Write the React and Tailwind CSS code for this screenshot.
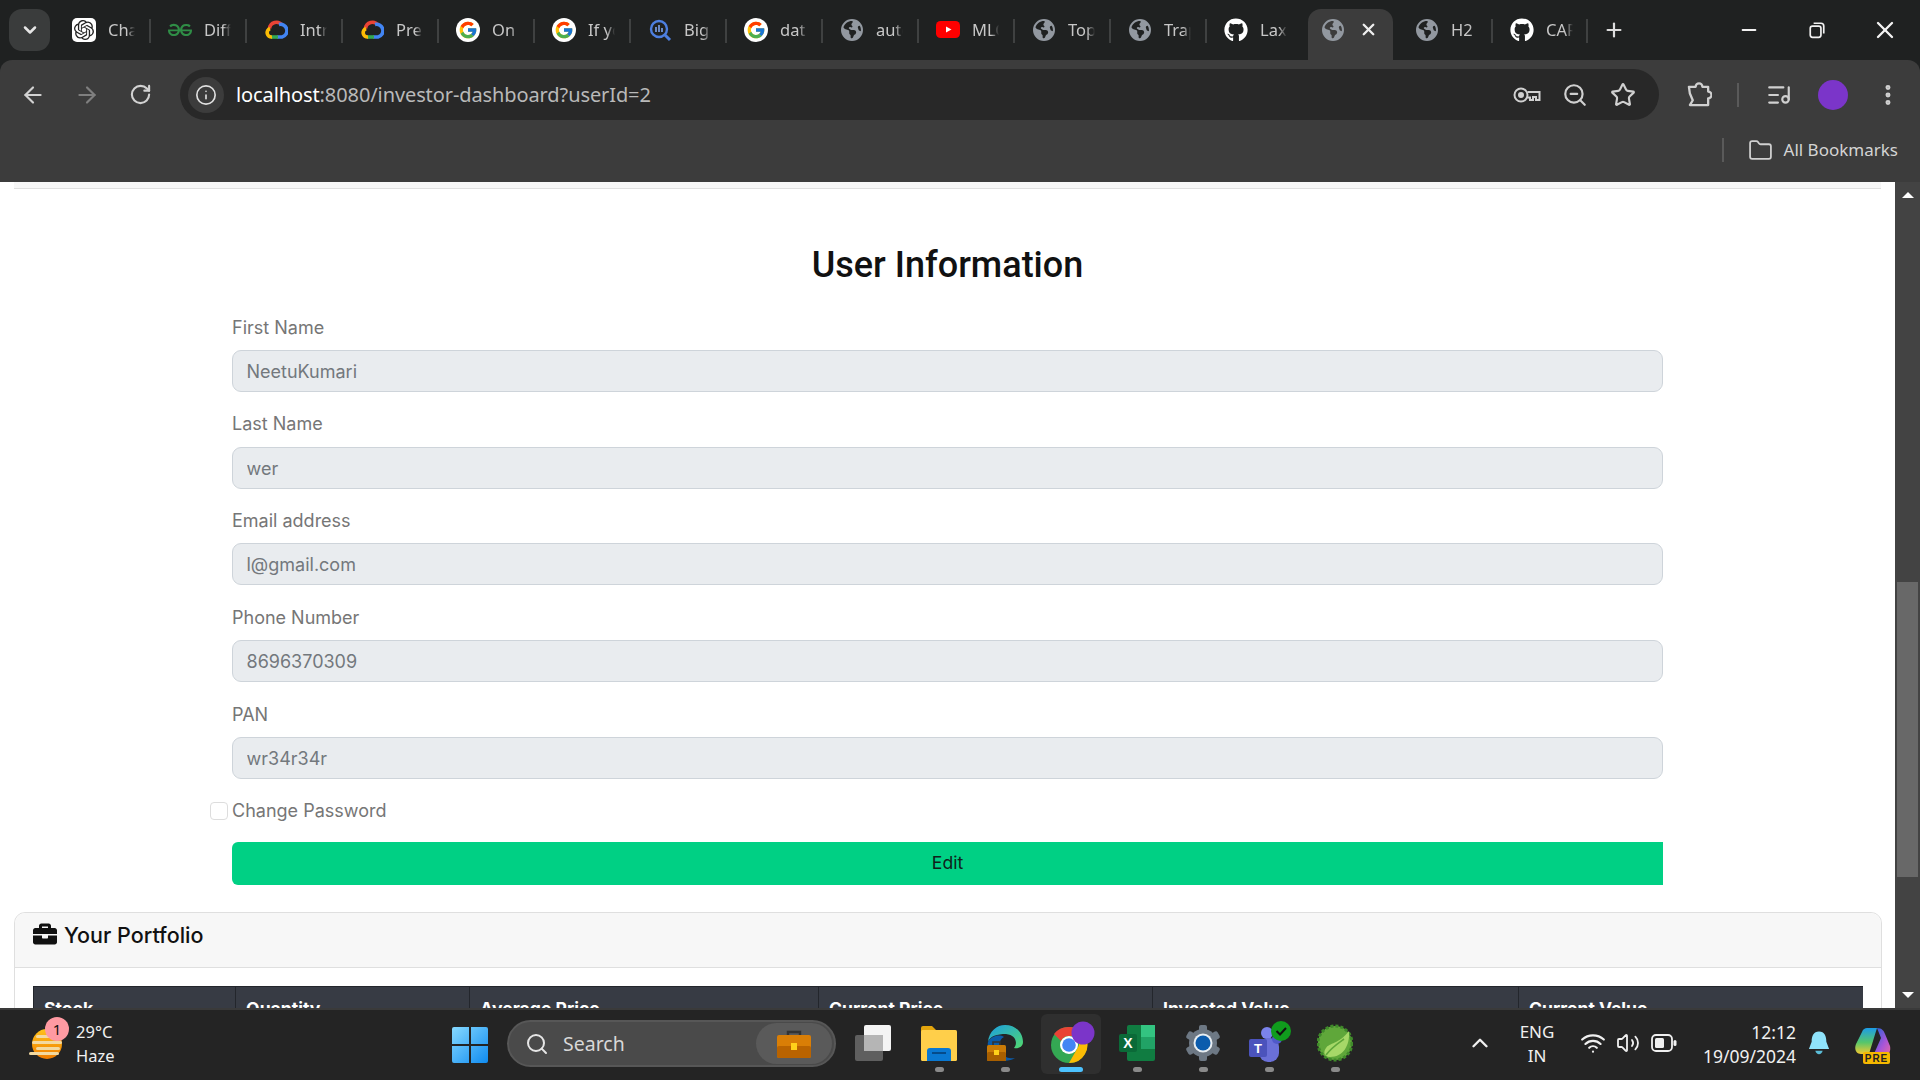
import {
  ArrowLeft,
  ArrowRight,
  ChevronDown,
  ChevronUp,
  EllipsisVertical,
  Folder,
  Info,
  ListMusic,
  Minus,
  Plus,
  RotateCw,
  Search,
  Star,
  Volume2,
  Wifi,
  X,
  ZoomOut,
} from 'lucide-react';
import { FaBriefcase, FaGithub } from 'react-icons/fa';
import { FaEarthAmericas } from 'react-icons/fa6';
import { FcGoogle } from 'react-icons/fc';
import { SiGeeksforgeeks, SiOpenai } from 'react-icons/si';

const uiFont = "font-['Noto_Sans',sans-serif]";

function GptIcon() {
  return (
    <span className="w-6 h-6 rounded-[5px] bg-white flex items-center justify-center">
      <SiOpenai className="w-5 h-5 text-[#222]" />
    </span>
  );
}

function GfgIcon() {
  return <SiGeeksforgeeks className="w-6 h-6 text-[#2f8d46]" />;
}

function CloudIcon() {
  return (
    <svg viewBox="0 0 24 24" className="w-6 h-6" fill="none" strokeWidth="3.6">
      <path d="M5.5 10.5 A7 7 0 0 1 18 7" stroke="#ea4335" />
      <path d="M15 6.5 A6 6 0 0 1 18 19 H13" stroke="#4285f4" />
      <path d="M14 19 H7" stroke="#34a853" />
      <path d="M8 19 A4.4 4.4 0 0 1 6 10.5" stroke="#fbbc05" />
    </svg>
  );
}

function GoogleIcon() {
  return (
    <span className="w-6 h-6 rounded-full bg-white flex items-center justify-center">
      <FcGoogle className="w-5 h-5" />
    </span>
  );
}

function QueryIcon() {
  return (
    <svg viewBox="0 0 24 24" className="w-6 h-6" fill="none">
      <circle cx="11" cy="11" r="8" stroke="#4d7fe0" strokeWidth="2.4" />
      <path d="M16.5 16.5 L22 22" stroke="#4d7fe0" strokeWidth="3" />
      <path d="M8 9 V14 M11 7 V14 M14 10 V14" stroke="#7da3ee" strokeWidth="1.6" />
    </svg>
  );
}

function GlobeIcon() {
  return <FaEarthAmericas className="w-[22px] h-[22px] text-[#9298a0]" />;
}

function TubeIcon() {
  return (
    <svg viewBox="0 0 24 24" className="w-6 h-6">
      <rect x="0" y="3" width="24" height="17" rx="4.5" fill="#ff0000" />
      <path d="M10 8.5 L15.5 11.5 L10 14.5 Z" fill="#fff" />
    </svg>
  );
}

function HubIcon() {
  return (
    <span className="w-6 h-6 rounded-full bg-[#1f2121] flex items-center justify-center">
      <FaGithub className="w-6 h-6 text-white" />
    </span>
  );
}

const tabs = [
  { icon: GptIcon, label: 'Chat' },
  { icon: GfgIcon, label: 'Diff' },
  { icon: CloudIcon, label: 'Intro' },
  { icon: CloudIcon, label: 'Pre' },
  { icon: GoogleIcon, label: 'On' },
  { icon: GoogleIcon, label: 'If yo' },
  { icon: QueryIcon, label: 'Big' },
  { icon: GoogleIcon, label: 'dat' },
  { icon: GlobeIcon, label: 'auto' },
  { icon: TubeIcon, label: 'MLO' },
  { icon: GlobeIcon, label: 'Top' },
  { icon: GlobeIcon, label: 'Trap' },
  { icon: HubIcon, label: 'Lax', last: true },
];

function Tab({ icon: Icon, label, last, width = 'w-24' }) {
  return (
    <div className={`${width} h-[42px] shrink-0 flex items-center pl-[17px] relative`}>
      <span className="w-6 h-6 flex items-center justify-center shrink-0">
        <Icon />
      </span>
      <span className="ml-3 w-[27px] overflow-hidden whitespace-nowrap text-[16.5px] leading-6 text-[#c7c7c7] [mask-image:linear-gradient(to_right,black_70%,transparent)]">
        {label}
      </span>
      {!last && <span className="absolute right-0 top-[10px] w-[2px] h-6 bg-[#3f4141]" />}
    </div>
  );
}

function TabStrip() {
  return (
    <div className="h-[60px] shrink-0 bg-[#1f2121] flex items-start">
      <button className="ml-[9px] mt-[9px] w-[41px] h-[42px] rounded-[13px] bg-[#3a3c3c] flex items-center justify-center">
        <ChevronDown className="w-5 h-5 text-[#e6e6e6]" strokeWidth={3} />
      </button>
      <div className="ml-[5px] mt-[9px] flex items-start">
        {tabs.map((tab) => (
          <Tab key={tab.label + tab.icon.name} {...tab} />
        ))}
        <div className="ml-[5px] w-[85px] h-[51px] rounded-t-[13px] bg-[#3c3c3c] flex items-start pt-[9px] pl-[13px] shrink-0">
          <span className="w-6 h-6 flex items-center justify-center">
            <GlobeIcon />
          </span>
          <X className="ml-[14px] mt-[2px] w-[19px] h-[19px] text-[#eeeeee]" strokeWidth={3} />
        </div>
        <div className="ml-[5px] flex">
          <Tab icon={GlobeIcon} label="H2" width="w-[95px]" />
          <Tab icon={HubIcon} label="CAR" width="w-[95px]" />
        </div>
        <Plus className="ml-[15px] mt-[10px] w-[22px] h-[22px] text-[#dddddd]" strokeWidth={2.4} />
      </div>
      <div className="ml-auto mr-[1px] flex text-[#f2f2f2] pt-[8px]">
        <span className="w-[68px] h-[44px] flex items-center justify-center">
          <Minus className="w-[22px] h-[22px]" />
        </span>
        <span className="w-[68px] h-[44px] flex items-center justify-center">
          <svg viewBox="0 0 16 16" className="w-[18px] h-[18px]" fill="none" stroke="currentColor" strokeWidth="1.5">
            <rect x="2" y="4.5" width="9.5" height="10" rx="2" />
            <path d="M5 2 H11.5 A2.5 2.5 0 0 1 14 4.5 V11" />
          </svg>
        </span>
        <span className="w-[68px] h-[44px] flex items-center justify-center">
          <X className="w-[28px] h-[28px]" strokeWidth={2} />
        </span>
      </div>
    </div>
  );
}

function KeyIcon() {
  return (
    <svg viewBox="0 0 28 20" className="w-[28px] h-[20px]" fill="none" stroke="#d0d0d0" strokeWidth="2">
      <circle cx="8" cy="10" r="6.5" />
      <circle cx="8" cy="10" r="2" fill="#d0d0d0" />
      <path d="M14.5 7 H26.5 V15 H23 V12 H20 V15 H17 V12.5 H14.5" />
    </svg>
  );
}

function ExtensionIcon() {
  return (
    <svg viewBox="0 0 26 28" className="w-[25px] h-[27px]" fill="none" stroke="#d0d0d0" strokeWidth="2.4" strokeLinejoin="round">
      <path d="M2 6 H9 A3.5 3.5 0 0 1 16 6 H22 V11 A3.5 3.5 0 0 1 22 18 V25 H3 L6 20 L3 13 L2 6 Z" />
    </svg>
  );
}

function Toolbar() {
  return (
    <div className="h-[122px] shrink-0 bg-[#1f2121]">
      <div className="h-full bg-[#3c3c3c] rounded-t-[12px] flex flex-col">
        <div className="h-[70px] pt-[9px] flex items-start">
          <div className="w-[180px] h-[51px] flex items-center text-[#d2d2d2]">
            <ArrowLeft className="ml-[20px] w-[26px] h-[26px]" strokeWidth={2} />
            <ArrowRight className="ml-[28px] w-[26px] h-[26px] text-[#7f7f7f]" strokeWidth={2} />
            <RotateCw className="ml-[29px] w-[23px] h-[23px]" strokeWidth={2.2} />
          </div>
          <div className="w-[1479px] h-[51px] rounded-full bg-[#282828] flex items-center">
            <span className="ml-[8px] w-[36px] h-[36px] rounded-full bg-[#3c3c3c] flex items-center justify-center">
              <Info className="w-[22px] h-[22px] text-[#e0e0e0]" strokeWidth={1.8} />
            </span>
            <span className={`ml-[12px] text-[20px] tracking-[-0.1px] text-[#b9b9b9] whitespace-nowrap ${uiFont}`}>
              <span className="text-white">localhost</span>:8080/investor-dashboard?userId=2
            </span>
            <div className="ml-auto mr-[23px] flex items-center text-[#d0d0d0]">
              <KeyIcon />
              <ZoomOut className="ml-[21px] w-[26px] h-[26px]" strokeWidth={2} />
              <Star className="ml-[22px] w-[26px] h-[26px]" strokeWidth={2} />
            </div>
          </div>
          <div className="flex-1 h-[51px] flex items-center text-[#d0d0d0]">
            <span className="ml-[28px]">
              <ExtensionIcon />
            </span>
            <span className="ml-[25px] w-[2px] h-6 bg-[#5a5a5a]" />
            <ListMusic className="ml-[27px] w-[26px] h-[26px]" strokeWidth={2} />
            <span className="ml-[26px] w-[30px] h-[30px] rounded-full bg-[#7b35c9]" />
            <EllipsisVertical className="ml-[27px] w-[26px] h-[26px]" strokeWidth={2.6} />
          </div>
        </div>
        <div className="flex-1 flex items-center justify-end pr-[22px] pb-[12px]">
          <span className="w-[2px] h-6 bg-[#5a5a5a]" />
          <Folder className="ml-[24px] w-[25px] h-[25px] text-[#d0d0d0]" strokeWidth={1.7} />
          <span className={`ml-[11px] text-[17px] text-[#d4d4d4] whitespace-nowrap ${uiFont}`}>All Bookmarks</span>
        </div>
      </div>
    </div>
  );
}

const fields = [
  { label: 'First Name', value: 'NeetuKumari' },
  { label: 'Last Name', value: 'wer' },
  { label: 'Email address', value: 'l@gmail.com' },
  { label: 'Phone Number', value: '8696370309' },
  { label: 'PAN', value: 'wr34r34r' },
];

function Field({ label, value }) {
  return (
    <div className="mb-[19.6px]">
      <label className="block mb-[8.8px] text-[18px] leading-[26.4px] text-[#767676]">{label}</label>
      <input
        readOnly
        value={value}
        className="block w-full h-[42px] pl-[13.5px] pr-[14px] pt-[1px] rounded-[9px] border border-[#ced4da] bg-[#e9ecef] text-[18px] text-[#73787d] outline-none"
      />
    </div>
  );
}

const columns = [
  { name: 'Stock', width: 'w-[202px]' },
  { name: 'Quantity', width: 'w-[234px]' },
  { name: 'Average Price', width: 'w-[349px]' },
  { name: 'Current Price', width: 'w-[334px]' },
  { name: 'Invested Value', width: 'w-[366px]' },
  { name: 'Current Value', width: 'flex-1' },
];

function PageContent() {
  return (
    <div className="flex-1 min-w-0 bg-white font-['Inter',sans-serif]">
      <div className="mx-[14px] h-[7px] bg-[#f7f7f7] border-b border-[#dfdfdf]" />
      <h2 className="mt-[55px] text-center text-[36px] leading-[42px] font-medium text-[#111] font-['Roboto',sans-serif]">
        User Information
      </h2>
      <form className="mt-[28.6px] mx-[232px]">
        {fields.map((field) => (
          <Field key={field.label} {...field} />
        ))}
        <div className="h-[26px] -mt-[0.6px] flex items-center -ml-[22px]">
          <span className="w-[18px] h-[18px] rounded-[4px] border border-[#dddddd] bg-white" />
          <span className="ml-[4px] text-[18px] text-[#767676]">Change Password</span>
        </div>
        <button
          type="button"
          className="mt-[17.6px] w-full h-[43px] rounded-l-[6px] bg-[#00d084] text-[17.6px] text-[#10201a]"
        >
          Edit
        </button>
      </form>
      <div className="mt-[27px] ml-[14px] mr-[13px] rounded-t-[11px] border border-[#dfdfdf]">
        <div className="h-[55px] bg-[#f7f7f7] rounded-t-[11px] border-b border-[#dfdfdf] flex items-start pt-[8px] pl-[18px]">
          <FaBriefcase className="mt-[1px] w-[24px] h-[24px] text-[#111]" />
          <span className="ml-[7px] text-[21.5px] leading-[28px] font-medium text-[#111]">Your Portfolio</span>
        </div>
        <div className="mt-[18px] mx-[18px] h-[60px] bg-[#373b44] flex border-t border-[#23262c]">
          {columns.map((col) => (
            <div
              key={col.name}
              className={`${col.width} px-[10px] pt-[9px] border-l border-[#23262c] text-[17.6px] font-bold text-white whitespace-nowrap`}
            >
              {col.name}
            </div>
          ))}
        </div>
      </div>
    </div>
  );
}

function Scrollbar() {
  return (
    <div className="w-[25px] shrink-0 bg-[#434343] flex flex-col items-center">
      <div className="h-[26px] w-full flex items-center justify-center">
        <span className="w-0 h-0 border-x-[6px] border-x-transparent border-b-[6px] border-b-white" />
      </div>
      <div className="h-[374px]" />
      <div className="h-[295px] w-[21px] bg-[#686868]" />
      <div className="flex-1" />
      <div className="h-[26px] w-full flex items-center justify-center">
        <span className="w-0 h-0 border-x-[6px] border-x-transparent border-t-[6px] border-t-white" />
      </div>
    </div>
  );
}

function WeatherIcon() {
  return (
    <svg viewBox="0 0 34 32" className="w-[34px] h-[32px]">
      <defs>
        <linearGradient id="sun" x1="0" y1="0" x2="0" y2="1">
          <stop offset="0" stopColor="#ffc21a" />
          <stop offset="1" stopColor="#f07c00" />
        </linearGradient>
      </defs>
      <circle cx="18" cy="16" r="15" fill="url(#sun)" />
      <g fill="#f3d9a0">
        <rect x="7" y="7" width="22" height="3" rx="1.5" />
        <rect x="3" y="13" width="30" height="3" rx="1.5" />
        <rect x="7" y="19" width="24" height="3" rx="1.5" />
        <rect x="0" y="24" width="30" height="3" rx="1.5" />
      </g>
    </svg>
  );
}

function WindowsLogo() {
  return (
    <svg viewBox="0 0 36 36" className="w-[36px] h-[36px]">
      <defs>
        <linearGradient id="win" x1="0" y1="0" x2="1" y2="1">
          <stop offset="0" stopColor="#86d9ff" />
          <stop offset="1" stopColor="#0f8bf0" />
        </linearGradient>
      </defs>
      <path fill="url(#win)" d="M0 2 a2 2 0 0 1 2-2 H17 V17 H0 Z M19 0 H34 a2 2 0 0 1 2 2 V17 H19 Z M0 19 H17 V36 H2 a2 2 0 0 1-2-2 Z M19 19 H36 V34 a2 2 0 0 1-2 2 H19 Z" />
    </svg>
  );
}

function BriefcaseColor() {
  return (
    <svg viewBox="0 0 34 28" className="w-[34px] h-[28px]">
      <path d="M11 6 V2 H23 V6" fill="none" stroke="#333" strokeWidth="2.4" />
      <rect y="5" width="34" height="23" rx="2" fill="#d97e06" />
      <rect y="16" width="34" height="12" rx="2" fill="#b96300" />
      <rect x="14" y="13" width="6" height="7" fill="#ffd11a" />
    </svg>
  );
}

function TaskViewIcon() {
  return (
    <svg viewBox="0 0 36 36" className="w-[36px] h-[36px]">
      <rect x="0" y="10" width="28" height="26" rx="2" fill="#5f5f5f" />
      <rect x="9" y="0" width="27" height="26" rx="2" fill="#f4f4f4" />
      <rect x="9" y="10" width="19" height="16" fill="#b5b5b5" />
    </svg>
  );
}

function ExplorerIcon() {
  return (
    <svg viewBox="0 0 36 36" className="w-[36px] h-[36px]">
      <path d="M0 3 a2 2 0 0 1 2-2 H11 L15 5 H34 V12 H0 Z" fill="#e3a50d" />
      <rect y="5" width="36" height="31" rx="1.5" fill="#ffcf4a" />
      <path d="M6 36 V26 a3 3 0 0 1 3-3 H27 a3 3 0 0 1 3 3 V36 Z" fill="#0a78d1" />
      <rect x="11" y="27" width="14" height="2" fill="#054b8a" />
    </svg>
  );
}

function EdgeIcon() {
  return (
    <svg viewBox="0 0 36 36" className="w-[36px] h-[36px]">
      <defs>
        <linearGradient id="edgeTop" x1="0" y1="0" x2="1" y2="1">
          <stop offset="0" stopColor="#1b9de2" />
          <stop offset="1" stopColor="#52d96e" />
        </linearGradient>
      </defs>
      <path d="M1 17 C2 6 10 0 18 0 C29 0 36 8 36 17 C36 22 31 24 27 23 C31 18 29 10 19 9 C10 9 3 11 1 17 Z" fill="url(#edgeTop)" />
      <path d="M1 17 C4 11 12 9 17 12 C12 14 11 22 15 28 C18 33 24 34 28 33 C22 37 12 37 6 31 C2 27 0 22 1 17 Z" fill="#0c5ba8" />
      <rect x="0" y="20" width="19" height="16" rx="1.5" fill="#c97a06" />
      <rect x="0" y="27" width="19" height="9" rx="1.5" fill="#a85f00" />
      <rect x="7" y="25" width="5" height="5" fill="#ffd11a" />
      <path d="M6 20 V17 H13 V20" fill="none" stroke="#333" strokeWidth="1.6" />
    </svg>
  );
}

function ChromeIcon() {
  return (
    <svg viewBox="0 0 48 44" className="w-[48px] h-[44px]">
      <circle cx="22" cy="24" r="18" fill="#34a853" />
      <path d="M22 6 A18 18 0 0 1 38 15 L22 15 A9 9 0 0 0 14 20 L7 13 A18 18 0 0 1 22 6 Z" fill="#ea4335" />
      <path d="M38 15 A18 18 0 0 1 22 42 L30 28 A9 9 0 0 0 30 17 Z" fill="#fbbc05" />
      <circle cx="22" cy="24" r="9" fill="#fff" />
      <circle cx="22" cy="24" r="6.8" fill="#4285f4" />
      <circle cx="36" cy="12" r="11.5" fill="#7b35c9" />
    </svg>
  );
}

function ExcelIcon() {
  return (
    <svg viewBox="0 0 36 36" className="w-[36px] h-[36px]">
      <rect x="8" y="0" width="28" height="36" rx="2" fill="#107c41" />
      <rect x="22" y="0" width="14" height="12" fill="#33c481" />
      <rect x="22" y="12" width="14" height="12" fill="#21a366" />
      <rect x="0" y="9" width="18" height="18" rx="2" fill="#0b6a38" />
      <text x="9" y="23" textAnchor="middle" fontSize="14" fontWeight="700" fill="#fff" fontFamily="Liberation Sans, sans-serif">X</text>
    </svg>
  );
}

function GearIcon() {
  return (
    <svg viewBox="0 0 36 36" className="w-[36px] h-[36px]">
      <g fill="#6d7884">
        <circle cx="18" cy="18" r="14" />
        <rect x="14" y="0" width="8" height="36" rx="2" />
        <rect x="14" y="0" width="8" height="36" rx="2" transform="rotate(60 18 18)" />
        <rect x="14" y="0" width="8" height="36" rx="2" transform="rotate(120 18 18)" />
      </g>
      <circle cx="18" cy="18" r="9.5" fill="#e8eef2" />
      <circle cx="18" cy="18" r="7.5" fill="#0b5cad" />
    </svg>
  );
}

function TeamsIcon() {
  return (
    <svg viewBox="0 0 44 44" className="w-[44px] h-[44px]">
      <circle cx="20" cy="12" r="6" fill="#7b83eb" />
      <rect x="12" y="17" width="20" height="24" rx="9" fill="#6a70d8" />
      <circle cx="30" cy="18" r="5" fill="#5059c9" />
      <rect x="2" y="18" width="18" height="18" rx="2" fill="#4b53bc" />
      <text x="11" y="32" textAnchor="middle" fontSize="13" fontWeight="700" fill="#fff" fontFamily="Liberation Sans, sans-serif">T</text>
      <circle cx="34" cy="10" r="10" fill="#109c1d" />
      <path d="M29.5 10 L33 13.5 L39 7" fill="none" stroke="#111" strokeWidth="2" />
    </svg>
  );
}

function SpringIcon() {
  return (
    <svg viewBox="0 0 36 38" className="w-[36px] h-[38px]">
      <circle cx="18" cy="19" r="17" fill="#5fa73a" stroke="#3f8a2a" strokeWidth="3" strokeDasharray="3 2" />
      <path d="M32 7 C33 22 26 33 13 33 C7 33 6 28 9 24 C12 19 22 20 32 7 Z" fill="#a6d868" />
      <path d="M9 31 C14 24 20 20 27 15" fill="none" stroke="#5fa73a" strokeWidth="1.6" />
    </svg>
  );
}

function CopilotIcon() {
  return (
    <svg viewBox="0 0 36 36" className="w-[36px] h-[36px]">
      <defs>
        <linearGradient id="copL" x1="0" y1="0" x2="0" y2="1">
          <stop offset="0" stopColor="#1c9ce8" />
          <stop offset="0.55" stopColor="#55c66b" />
          <stop offset="1" stopColor="#f4c92f" />
        </linearGradient>
        <linearGradient id="copR" x1="0" y1="0" x2="1" y2="1">
          <stop offset="0" stopColor="#1566d6" />
          <stop offset="0.6" stopColor="#a955d8" />
          <stop offset="1" stopColor="#e86aa0" />
        </linearGradient>
      </defs>
      <path d="M12 0 H22 L14 26 H6 C1 26 -1 21 1 16 L7 4 C8 1 10 0 12 0 Z" fill="url(#copL)" />
      <path d="M22 0 C27 0 29 3 30 6 L35 18 C36 23 34 28 29 28 H18 L26 10 Z" fill="url(#copR)" />
      <rect x="8" y="24" width="27" height="12" rx="2" fill="#f5b800" />
      <text x="21.5" y="33.5" textAnchor="middle" fontSize="10" fontWeight="700" letterSpacing="1" fill="#222" fontFamily="Liberation Sans, sans-serif">PRE</text>
    </svg>
  );
}

function BatteryIcon() {
  return (
    <svg viewBox="0 0 26 18" className="w-[26px] h-[18px]" fill="none">
      <rect x="1" y="1" width="20" height="16" rx="4" stroke="#f0f0f0" strokeWidth="1.8" />
      <rect x="4" y="4" width="9" height="10" rx="1.5" fill="#f0f0f0" />
      <rect x="22.5" y="6" width="3" height="6" rx="1.5" fill="#f0f0f0" />
    </svg>
  );
}

const taskIcons = [
  { icon: TaskViewIcon },
  { icon: ExplorerIcon, dot: true },
  { icon: EdgeIcon, dot: true },
  { icon: ChromeIcon, active: true },
  { icon: ExcelIcon, dot: true },
  { icon: GearIcon, dot: true },
  { icon: TeamsIcon, dot: true },
  { icon: SpringIcon, dot: true },
];

function TaskButton({ icon: Icon, dot, active }) {
  return (
    <div className="w-[66px] h-[72px] flex justify-center">
      <div className={`w-[60px] h-[60px] mt-[6px] rounded-[6px] flex flex-col items-center ${active ? 'bg-[#2f2f2f]' : ''}`}>
        <div className="h-[49px] pt-[9px] flex items-center justify-center">
          <Icon />
        </div>
        {dot && <span className="mt-[4px] w-[9px] h-[5px] rounded-full bg-[#8a8a8a]" />}
        {active && <span className="mt-[4px] w-[24px] h-[5px] rounded-full bg-[#4cc2ff]" />}
      </div>
    </div>
  );
}

function Taskbar() {
  return (
    <div className={`h-[72px] shrink-0 bg-[#242424] border-t-2 border-[#3a3a3a] flex items-start text-[#f0f0f0] ${uiFont}`}>
      <div className="ml-[29px] mt-[18px] relative w-[34px] h-[32px]">
        <WeatherIcon />
        <span className="absolute -top-[11px] left-[16px] w-[24px] h-[24px] rounded-full bg-[#ff9aa2] text-[#111] text-[15px] leading-[24px] text-center">
          1
        </span>
      </div>
      <div className="ml-[13px] mt-[10px] w-[60px] text-[16.5px] leading-[24px]">
        <div>29°C</div>
        <div>Haze</div>
      </div>
      <div className="ml-[316px] mt-[17px]">
        <WindowsLogo />
      </div>
      <div className="ml-[19px] mt-[10px] w-[329px] h-[47px] rounded-full bg-[#4a4a4a] border-2 border-[#575757] flex items-center">
        <Search className="ml-[16px] w-[24px] h-[24px] text-[#e6e6e6]" strokeWidth={2} />
        <span className="ml-[14px] text-[19.5px] text-[#d8d8d8]">Search</span>
        <span className="ml-auto mr-[2px] w-[76px] h-[41px] rounded-full bg-[#5a5a5a] flex items-center justify-center">
          <BriefcaseColor />
        </span>
      </div>
      <div className="ml-[4px] -mt-[2px] flex">
        {taskIcons.map((item, i) => (
          <TaskButton key={i} {...item} />
        ))}
      </div>
      <ChevronUp className="ml-[99px] mt-[20px] w-[26px] h-[26px]" strokeWidth={2.2} />
      <div className="ml-[14px] mt-[10px] w-[60px] text-center text-[17px] leading-[24px]">
        <div>ENG</div>
        <div>IN</div>
      </div>
      <Wifi className="ml-[13px] mt-[20px] w-[26px] h-[26px]" strokeWidth={2} />
      <Volume2 className="ml-[10px] mt-[21px] w-[24px] h-[24px]" strokeWidth={1.8} />
      <span className="ml-[11px] mt-[24px]">
        <BatteryIcon />
      </span>
      <div className="ml-[20px] mt-[10px] w-[99px] text-right text-[17.5px] leading-[24px]">
        <div>12:12</div>
        <div>19/09/2024</div>
      </div>
      <svg viewBox="0 0 24 26" className="ml-[12px] mt-[21px] w-[22px] h-[25px]">
        <path d="M12 0 C6 0 4 5 4 11 L1 19 H23 L20 11 C20 5 18 0 12 0 Z" fill="#8fe3fb" />
        <path d="M8 21 H16 C15 26 9 26 8 21 Z" fill="#5bbdd8" />
      </svg>
      <div className="ml-[25px] mt-[18px]">
        <CopilotIcon />
      </div>
    </div>
  );
}

export default function App() {
  return (
    <div className="w-screen h-screen overflow-hidden flex flex-col bg-white">
      <div className={uiFont}>
        <TabStrip />
        <Toolbar />
      </div>
      <div className="flex-1 min-h-0 flex overflow-hidden">
        <PageContent />
        <Scrollbar />
      </div>
      <Taskbar />
    </div>
  );
}
